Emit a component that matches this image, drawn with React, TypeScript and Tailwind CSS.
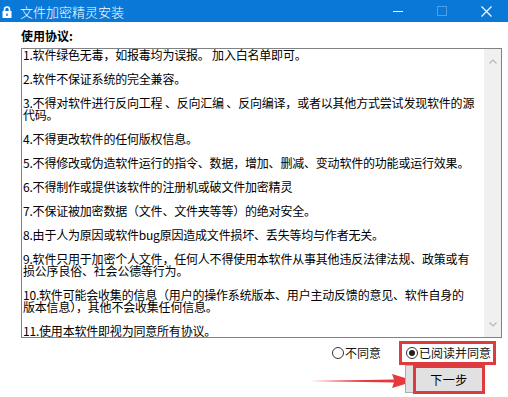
import React from "react";

// each item is split into the lines the original dialog shows
const items: string[][] = [
  ["1.软件绿色无毒，如报毒均为误报。 加入白名单即可。"],
  ["2.软件不保证系统的完全兼容。"],
  ["3.不得对软件进行反向工程 、反向汇编 、反向编译，或者以其他方式尝试发现软件的源", "代码。"],
  ["4.不得更改软件的任何版权信息。"],
  ["5.不得修改或伪造软件运行的指令、数据，增加、删减、变动软件的功能或运行效果。"],
  ["6.不得制作或提供该软件的注册机或破文件加密精灵"],
  ["7.不保证被加密数据（文件、文件夹等等）的绝对安全。"],
  ["8.由于人为原因或软件bug原因造成文件损坏、丢失等均与作者无关。"],
  ["9.软件只用于加密个人文件，任何人不得使用本软件从事其他违反法律法规、政策或有", "损公序良俗、社会公德等行为。"],
  ["10.软件可能会收集的信息（用户的操作系统版本、用户主动反馈的意见、软件自身的", "版本信息），其他不会收集任何信息。"],
  ["11.使用本软件即视为同意所有协议。"],
];

function TitleBar() {
  return (
    <div className="h-[22px] bg-[#0a78d7] flex items-center text-white">
      {/* lock icon */}
      <svg width="10" height="12" viewBox="0 0 10 12" className="ml-[2px] mt-[1px]">
        <path d="M2.5 5V3.5a2.5 2.5 0 0 1 5 0V5" fill="none" stroke="#fff" strokeWidth="1.6" />
        <rect x="0.5" y="5" width="9" height="7" fill="#fff" />
        <rect x="4.3" y="7.5" width="1.4" height="2.5" fill="#0a78d7" />
      </svg>
      <span className="ml-[8px] text-[13px] leading-none font-light">文件加密精灵安装</span>
      <div className="ml-auto flex items-center h-full">
        <div className="w-[44px] h-full flex items-center justify-center">
          <div className="w-[10px] h-px bg-white" />
        </div>
        <div className="w-[44px] h-full flex items-center justify-center">
          <div className="w-[10px] h-[10px] border border-[#4c9ee6]" />
        </div>
        <div className="w-[44px] h-full flex items-center justify-center">
          <svg width="11" height="11" viewBox="0 0 11 11">
            <path d="M0.5 0.5L10.5 10.5M10.5 0.5L0.5 10.5" stroke="#fff" strokeWidth="1.2" />
          </svg>
        </div>
      </div>
    </div>
  );
}

function Radio({ checked, label }: { checked?: boolean; label: string }) {
  return (
    <div className="flex items-center gap-px whitespace-nowrap">
      <span className="w-[12px] h-[12px] rounded-full border border-[#333] bg-white flex items-center justify-center">
        {checked && <span className="w-[6px] h-[6px] rounded-full bg-[#222]" />}
      </span>
      <span className="text-[12px] text-[#111]">{label}</span>
    </div>
  );
}

export default function App() {
  return (
    <div
      className="w-[508px] h-[397px] bg-white overflow-hidden flex flex-col"
      style={{ fontFamily: '"Noto Sans CJK SC", "Liberation Sans", sans-serif' }}
    >
      <TitleBar />
      <div className="px-[21px]">
        <div className="mt-[7px] text-[12px] leading-[14px] font-bold text-black">使用协议:</div>
        <div className="mt-[5px] h-[290px] w-[481px] border border-[#828282] flex overflow-hidden">
          <div className="flex-1 pl-[1px] text-[12px] leading-[12px] tracking-[-0.2px] text-black flex flex-col gap-[12px] overflow-hidden">
            {items.map((lines) => (
              <p key={lines[0]} className="whitespace-nowrap">
                {lines.map((l, i) => (
                  <React.Fragment key={l}>
                    {i > 0 && <br />}
                    {l}
                  </React.Fragment>
                ))}
              </p>
            ))}
          </div>
          <div className="w-[17px] shrink-0 bg-[#f0f0f0] flex flex-col items-center justify-between py-[10px]">
            <svg width="8" height="5" viewBox="0 0 8 5">
              <path d="M0.5 4.5L4 1L7.5 4.5" fill="none" stroke="#b8b8b8" strokeWidth="1.2" />
            </svg>
            <svg width="8" height="5" viewBox="0 0 8 5">
              <path d="M0.5 0.5L4 4L7.5 0.5" fill="none" stroke="#b8b8b8" strokeWidth="1.2" />
            </svg>
          </div>
        </div>
      </div>

      <div className="mt-[3px] flex items-center justify-end pr-[12px]">
        <Radio label="不同意" />
        <div className="ml-[18px] h-[24px] border-[3px] border-[#dc3b3f] flex items-center pl-[4px] pr-[2px]">
          <Radio checked label="已阅读并同意" />
        </div>
      </div>

      <div className="relative flex justify-end pr-[23px]">
        {/* red arrow annotation */}
        <svg width="106" height="18" viewBox="0 0 106 18" className="absolute left-[310px] top-[7px]">
          <path d="M0 9L84 7.5L82 2L105 9L82 16L84 10.5Z" fill="#e8383c" />
        </svg>
        <button className="relative w-[80px] h-[28px] bg-[#e1e1e1] border border-[#adadad]">
          <span className="absolute left-[7px] -top-px -right-px -bottom-[2px] border-[3px] border-[#dc3b3f] flex items-center justify-center text-[12px] tracking-[0.5px] text-black">
            下一步
          </span>
        </button>
      </div>
    </div>
  );
}
